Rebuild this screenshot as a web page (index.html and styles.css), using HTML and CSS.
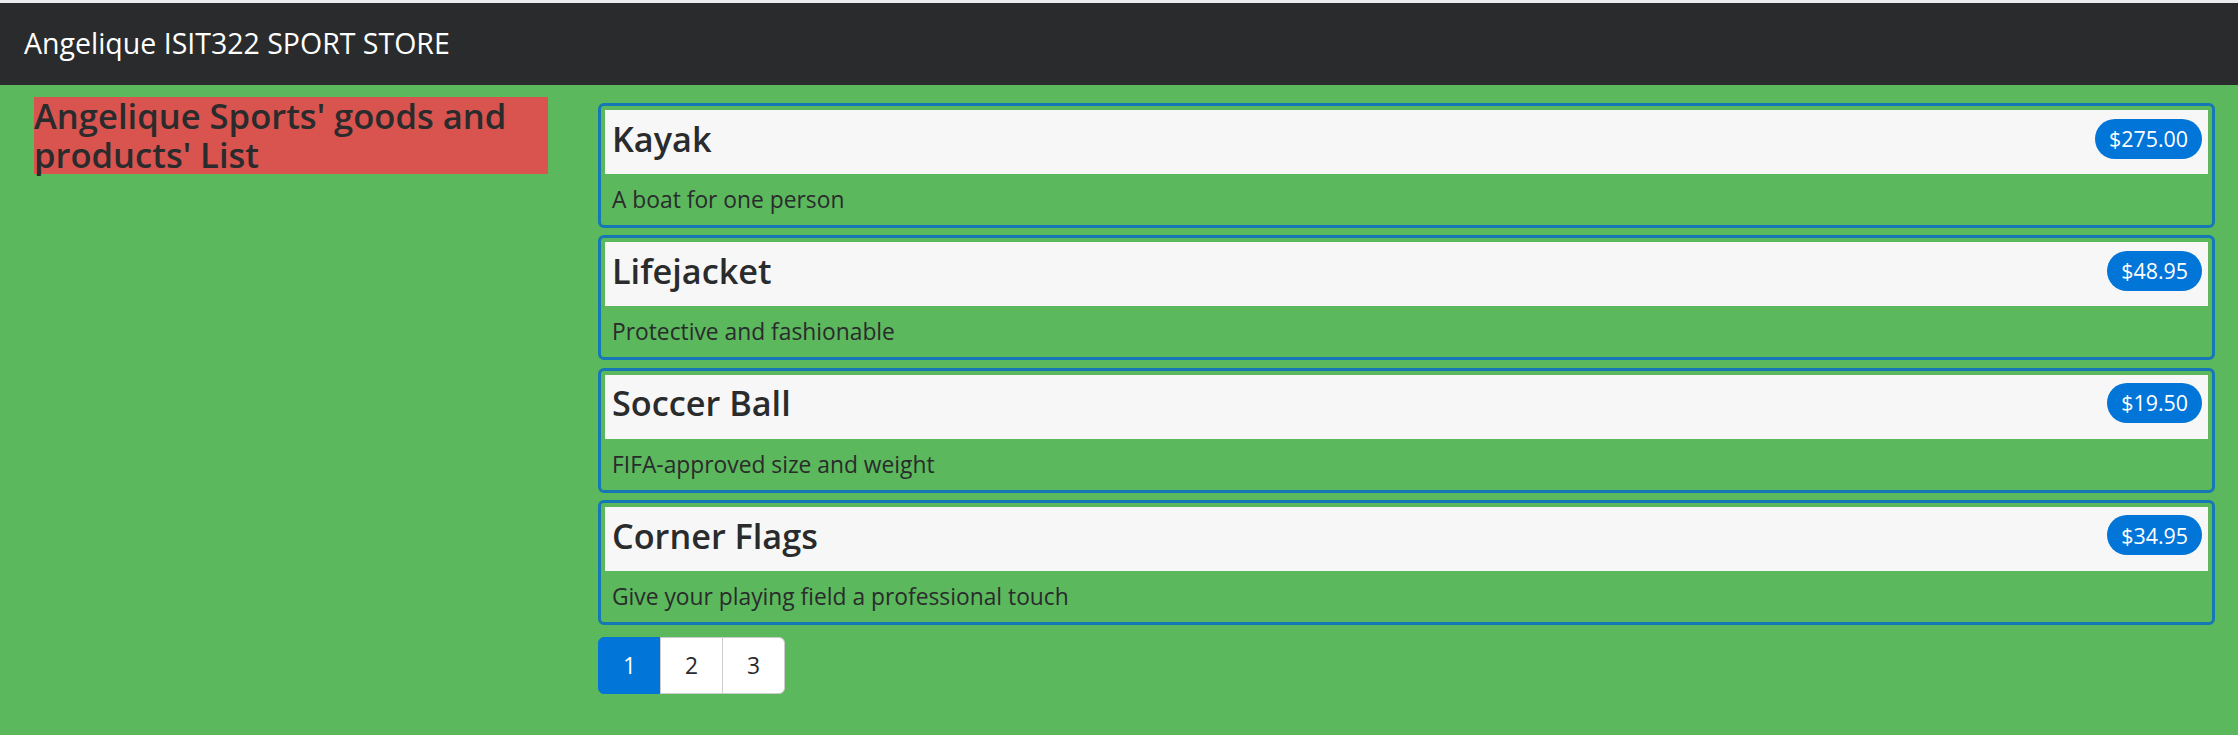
FILE: index.html
```html
<!DOCTYPE html>
<html lang="en">
<head>
<meta charset="utf-8">
<title>Angelique ISIT322 SPORT STORE</title>
<link rel="stylesheet" href="styles.css">
</head>
<body>
<div class="top-strip"></div>
<nav class="navbar">
  <span class="brand">Angelique ISIT322 SPORT STORE</span>
</nav>
<main class="content">
  <aside class="side">
    <h4 class="side-title">Angelique Sports' goods and products' List</h4>
  </aside>
  <section class="products">
    <div class="card">
      <h4 class="card-head"><span class="card-name">Kayak</span><span class="badge">$275.00</span></h4>
      <div class="card-text">A boat for one person</div>
    </div>
    <div class="card">
      <h4 class="card-head"><span class="card-name">Lifejacket</span><span class="badge">$48.95</span></h4>
      <div class="card-text">Protective and fashionable</div>
    </div>
    <div class="card">
      <h4 class="card-head"><span class="card-name">Soccer Ball</span><span class="badge">$19.50</span></h4>
      <div class="card-text">FIFA-approved size and weight</div>
    </div>
    <div class="card">
      <h4 class="card-head"><span class="card-name">Corner Flags</span><span class="badge">$34.95</span></h4>
      <div class="card-text">Give your playing field a professional touch</div>
    </div>
    <div class="pager">
      <button class="page-btn active">1</button>
      <button class="page-btn">2</button>
      <button class="page-btn">3</button>
    </div>
  </section>
</main>
</body>
</html>
```

FILE: styles.css
```css
html {
  background: #5cb85c;
}

body {
  margin: 0;
  min-height: 732px;
  font-family: "Open Sans", "Noto Sans", "Liberation Sans", sans-serif;
  font-size: 22.8px;
  line-height: 1.5;
  color: #292b2c;
  background: #5cb85c;
}

.top-strip {
  height: 3px;
  background: #ececec;
}

.navbar {
  height: 82px;
  background: #292b2c;
  display: flex;
  align-items: center;
  padding: 0 23px 2px 24px;
  box-sizing: border-box;
}

.brand {
  color: #fff;
  font-size: 28.5px;
  line-height: 1;
  white-space: nowrap;
}

.content {
  display: flex;
  align-items: flex-start;
  padding: 12px 23px 0 34px;
}

.side {
  width: 514px;
  flex: none;
  margin-right: 50px;
}

.side-title {
  margin: 0;
  font-size: 34.6px;
  line-height: 38.5px;
  font-weight: 600;
  background: #d9534f;
  color: #292b2c;
}

.products {
  flex: 1;
  min-width: 0;
  padding-top: 6px;
  display: flex;
  flex-direction: column;
  gap: 7.3px;
}

.card {
  height: 125px;
  box-sizing: border-box;
  border: 3px solid #1577b6;
  border-radius: 6px;
  padding: 4px;
}

.card-head {
  margin: 0;
  height: 64px;
  box-sizing: border-box;
  display: flex;
  align-items: center;
  justify-content: space-between;
  padding: 0 6px 7px 7px;
  background: #f7f7f7;
  font-size: 34.25px;
  line-height: 1.1;
  font-weight: 600;
}

.badge {
  display: inline-flex;
  align-items: center;
  height: 40px;
  padding: 0 14px;
  border-radius: 20px;
  background: #0275d8;
  color: #fff;
  font-size: 21.4px;
  font-weight: 400;
}

.card-text {
  padding: 9px 7px 0;
  font-size: 22.8px;
  line-height: 34px;
}

.pager {
  display: flex;
  margin-top: 4.7px;
}

.page-btn {
  width: 63px;
  height: 57px;
  margin: 0 0 0 -1px;
  border: 1.5px solid #ccc;
  background: #fff;
  color: #292b2c;
  font-family: inherit;
  font-size: 22.8px;
  padding: 0;
}

.page-btn:first-child {
  margin-left: 0;
  border-radius: 6px 0 0 6px;
}

.page-btn:last-child {
  border-radius: 0 6px 6px 0;
}

.page-btn.active {
  background: #0275d8;
  border-color: #0275d8;
  color: #fff;
}
```
